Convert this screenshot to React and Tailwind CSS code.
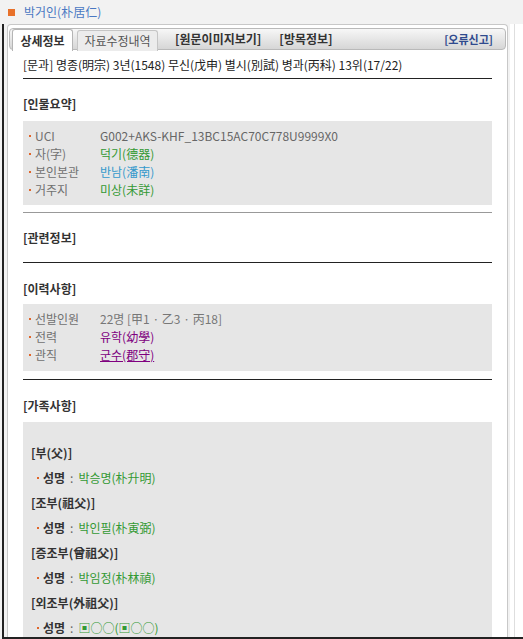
import React from 'react';

const font = { fontFamily: '"Noto Sans CJK KR", "Liberation Sans", sans-serif' };

const summaryRows = [
  { label: 'UCI', value: 'G002+AKS-KHF_13BC15AC70C778U9999X0', color: 'text-[#666666]' },
  { label: '자(字)', value: '덕기(德器)', color: 'text-[#339933]' },
  { label: '본인본관', value: '반남(潘南)', color: 'text-[#3399cc]' },
  { label: '거주지', value: '미상(未詳)', color: 'text-[#339933]' },
];

const careerRows = [
  { label: '선발인원', value: '22명 [甲1 · 乙3 · 丙18]', color: 'text-[#777777]' },
  { label: '전력', value: '유학(幼學)', color: 'text-[#800080]' },
  { label: '관직', value: '군수(郡守)', color: 'text-[#800080] underline' },
];

const family = [
  { title: '[부(父)]', name: '박승명(朴升明)' },
  { title: '[조부(祖父)]', name: '박인필(朴寅弼)' },
  { title: '[증조부(曾祖父)]', name: '박임정(朴林禎)' },
  { title: '[외조부(外祖父)]', name: '▣○○(▣○○)' },
];

const Dot = () => <span className="mr-[4px] inline-block h-[2px] w-[2px] bg-[#e0662a]" />;

const InfoRow = ({ label, value, color }) => (
  <div className="flex h-[18px] items-center">
    <div className="flex w-[71px] items-center text-[#707070]">
      <Dot />
      {label}
    </div>
    <div className={color}>{value}</div>
  </div>
);

const App = () => {
  return (
    <div className="flex h-[639px] w-[523px] flex-col overflow-hidden bg-[#f2f2f2] text-[12px] leading-[16px]" style={font}>
      {/* Title bar */}
      <div className="flex h-[24px] shrink-0 items-center pl-[8px]">
        <span className="mr-[9px] inline-block h-[7px] w-[7px] bg-[#e8712a]" />
        <span className="text-[#4a78c2]">박거인(朴居仁)</span>
      </div>

      <div className="flex min-h-0 flex-1 pl-[2px]">
        <div className="flex min-h-0 flex-1 overflow-hidden border-b-[2px] border-l-[2px] border-[#222222] bg-white">
          <div className="flex w-[506px] shrink-0 bg-[#f2f2f2] pl-[3px]">
            {/* Main panel */}
            <div className="flex w-[501px] flex-col rounded-t-[4px] border border-b-0 border-[#c8c8c8] bg-white px-[1px] pt-[3px]">
              {/* Tabs */}
              <div className="flex h-[22px] shrink-0 items-end rounded-[4px] border border-[#b9b9b9] bg-gradient-to-b from-[#f7f7f7] to-[#d6d6d6] pl-[2px] pr-[12px]">
                <div className="mb-[-2px] flex h-[22px] w-[61px] items-center justify-center rounded-t-[3px] border border-b-0 border-[#b5b5b5] bg-white font-bold text-[#333333]">
                  상세정보
                </div>
                <div className="mb-[-2px] ml-[4px] flex h-[21px] w-[81px] items-center justify-center rounded-t-[3px] border border-b-0 border-[#c5c5c5] bg-[#ececec] text-[#555555]">
                  자료수정내역
                </div>
                <div className="flex h-[20px] flex-1 items-center font-bold text-[#333333]">
                  <span className="ml-[17px]">[원문이미지보기]</span>
                  <span className="ml-[18px]">[방목정보]</span>
                  <span className="ml-auto text-[11px] text-[#2f4a8e]">[오류신고]</span>
                </div>
              </div>

              <div className="shrink-0 px-[14px]">
                <div className="flex h-[28px] items-center pt-[2px] text-[#222222]">
                  [문과] 명종(明宗) 3년(1548) 무신(戊申) 별시(別試) 병과(丙科) 13위(17/22)
                </div>
                <div className="h-[1px] bg-[#222222]" />

                {/* 인물요약 */}
                <div className="pt-[17px] font-bold text-[#333333]">[인물요약]</div>
                <div className="mt-[9px] bg-[#e6e6e6] px-[6px] pb-[6px] pt-[6px]">
                  {summaryRows.map((r) => (
                    <InfoRow key={r.label} {...r} />
                  ))}
                </div>
                <div className="mt-[7px] h-[1px] bg-[#999999]" />

                {/* 관련정보 */}
                <div className="pt-[17px] font-bold text-[#333333]">[관련정보]</div>
                <div className="mt-[16px] h-[1px] bg-[#222222]" />

                {/* 이력사항 */}
                <div className="pt-[18px] font-bold text-[#333333]">[이력사항]</div>
                <div className="mt-[7px] bg-[#e6e6e6] px-[6px] pb-[7px] pt-[6px]">
                  {careerRows.map((r) => (
                    <InfoRow key={r.label} {...r} />
                  ))}
                </div>
                <div className="mt-[8px] h-[1px] bg-[#222222]" />

                {/* 가족사항 */}
                <div className="pt-[18px] font-bold text-[#333333]">[가족사항]</div>
                <div className="mt-[8px] bg-[#e6e6e6] px-[8px] pb-[10px] pt-[18px]">
                  {family.map((f) => (
                    <div key={f.title}>
                      <div className="flex h-[25px] items-center font-bold text-[#333333]">{f.title}</div>
                      <div className="flex h-[25px] items-center pl-[6px]">
                        <Dot />
                        <span className="font-bold text-[#333333]">성명</span>
                        <span className="ml-[5px] mr-[5px] text-[#666666]">:</span>
                        <span className="text-[#339933]">{f.name}</span>
                      </div>
                    </div>
                  ))}
                </div>
              </div>
            </div>
          </div>
          <div className="ml-[4px] w-[1px] bg-[#dedede]" />
        </div>
      </div>
    </div>
  );
};

export default App;
